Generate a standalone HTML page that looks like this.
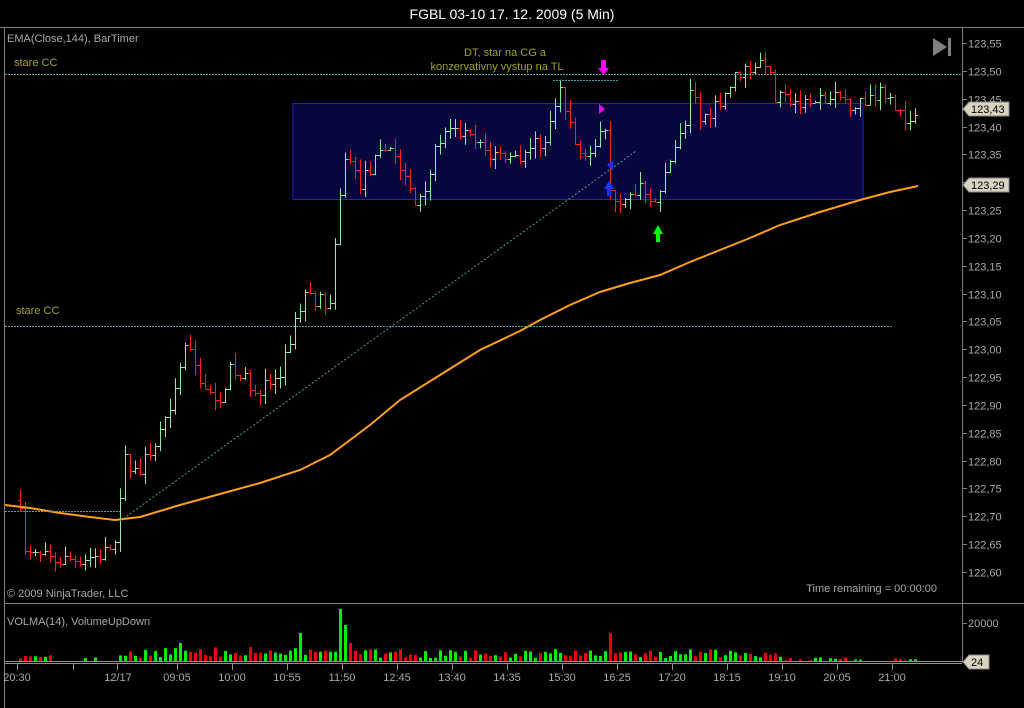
<!DOCTYPE html>
<html><head><meta charset="utf-8">
<style>
html,body{margin:0;padding:0;background:#000;width:1024px;height:708px;overflow:hidden}
svg{display:block;font-family:"Liberation Sans",sans-serif}
</style></head><body>
<svg id="s" width="1024" height="708" xmlns="http://www.w3.org/2000/svg">
<rect width="1024" height="708" fill="#000"/>
<text x="512" y="19" fill="#fff" font-size="14" text-anchor="middle">FGBL 03-10  17. 12. 2009 (5 Min)</text>
<line x1="0" y1="27.5" x2="1024" y2="27.5" stroke="#808080"/>
<line x1="4.5" y1="27" x2="4.5" y2="708" stroke="#808080"/>
<line x1="4" y1="603.5" x2="1024" y2="603.5" stroke="#808080"/>
<line x1="962.5" y1="27" x2="962.5" y2="663" stroke="#808080"/>
<rect x="293" y="103.5" width="570" height="96" fill="#07073d" stroke="#2222cc"/>
<g id="dyn"></g>
<line x1="5" y1="74.5" x2="962" y2="74.5" stroke="#4aa6a6" stroke-dasharray="2,1"/>
<line x1="5" y1="326.5" x2="892" y2="326.5" stroke="#4aa6a6" stroke-dasharray="2,1"/>
<line x1="5" y1="511.5" x2="120" y2="511.5" stroke="#4aa6a6" stroke-dasharray="2,1"/>
<line x1="553" y1="80.5" x2="618" y2="80.5" stroke="#4aa6a6" stroke-dasharray="2,1"/>
<line x1="120" y1="521" x2="636" y2="151" stroke="#4a9a9a" stroke-dasharray="2,2"/>
<text x="7" y="42" fill="#a8a8a8" font-size="11">EMA(Close,144), BarTimer</text>
<text x="14" y="66" fill="#a0a020" font-size="11">stare CC</text>
<text x="16" y="314" fill="#a0a020" font-size="11">stare CC</text>
<text x="505" y="56" fill="#a0a020" font-size="11" text-anchor="middle">DT, star na CG a</text>
<text x="497" y="70" fill="#a0a020" font-size="11" text-anchor="middle">konzervativny vystup na TL</text>
<text x="7" y="597" fill="#a8a8a8" font-size="11">© 2009 NinjaTrader, LLC</text>
<text x="937" y="592" fill="#a8a8a8" font-size="11" text-anchor="end">Time remaining = 00:00:00</text>
<text x="7" y="625" fill="#a8a8a8" font-size="11">VOLMA(14), VolumeUpDown</text>
<polygon points="933,38 947,47 933,56" fill="#808080"/><rect x="948" y="38" width="3" height="18" fill="#808080"/>
<path d="M601,60h5v8h3l-5.5,7l-5.5,-7h3z" fill="#ff00ff"/>
<polygon points="599,104 605,109 599,114" fill="#ff00ff"/>
<polygon points="613,160 607,165 613,171" fill="#2030ff"/>
<path d="M607,196v-7h-3l5,-8l5,8h-3v7z" fill="#2030ff"/>
<path d="M656,242v-8h-3l5,-9l5,9h-3v8z" fill="#00ff00"/>
<g id="ax" fill="#a8a8a8" font-size="11"></g>
<g id="tags"></g>
</svg>
<script>
var NS="http://www.w3.org/2000/svg",dyn=document.getElementById('dyn'),ax=document.getElementById('ax');
function el(t,a,p){var e=document.createElementNS(NS,t);for(var k in a)e.setAttribute(k,a[k]);(p||dyn).appendChild(e);return e;}
function Y(p){return 43+(123.55-p)/0.05*27.84;}
for(var i=0;i<=19;i++){var p=123.55-i*0.05,y=Math.round(Y(p))+.5;
 el('line',{x1:962,y1:y,x2:967,y2:y,stroke:'#808080'},ax);
 var t=el('text',{x:968,y:y+4},ax);t.textContent=p.toFixed(2).replace('.',',');}
el('line',{x1:962,y1:623.5,x2:967,y2:623.5,stroke:'#808080'},ax);
var t=el('text',{x:968,y:627},ax);t.textContent='20000';
el('line',{x1:5,y1:661.5,x2:962,y2:661.5,stroke:'#909090'});
el('line',{x1:5,y1:663.5,x2:962,y2:663.5,stroke:'#909090'});
var tl=[[17,'20:30'],[73,''],[117,'12/17'],[177,'09:05'],[232,'10:00'],[287,'10:55'],[342,'11:50'],[397,'12:45'],[452,'13:40'],[507,'14:35'],[562,'15:30'],[617,'16:25'],[672,'17:20'],[727,'18:15'],[782,'19:10'],[837,'20:05'],[892,'21:00']];
tl.forEach(function(a){el('line',{x1:a[0]+.5,y1:663,x2:a[0]+.5,y2:670,stroke:'#909090'},ax);if(a[1]){var t=el('text',{x:a[0]+(a[1]=='12/17'?1:0),y:681,'text-anchor':'middle'},ax);t.textContent=a[1];}});
var K=[[20,122.73],[25,122.63],[60,122.62],[100,122.63],[115,122.65],[120,122.72],[125,122.80],[140,122.78],[150,122.82],[170,122.88],[185,123.01],[200,122.95],[215,122.90],[230,122.96],[260,122.93],[280,122.95],[295,123.05],[305,123.10],[330,123.08],[340,123.27],[345,123.35],[360,123.30],[390,123.37],[415,123.26],[430,123.32],[440,123.38],[460,123.39],[490,123.35],[520,123.35],[545,123.38],[560,123.46],[575,123.37],[595,123.35],[603,123.44],[610,123.30],[620,123.25],[640,123.30],[658,123.26],[670,123.35],[685,123.40],[690,123.47],[700,123.41],[720,123.45],[740,123.50],[765,123.52],[775,123.45],[800,123.44],[840,123.45],[860,123.44],[880,123.47],[890,123.46],[900,123.42],[910,123.40],[918,123.42]];
function P(x){for(var i=0;i<K.length-1;i++)if(x<=K[i+1][0]){var a=K[i],b=K[i+1];return a[1]+(b[1]-a[1])*(x-a[0])/(b[0]-a[0]);}return K[K.length-1][1];}
var seed=7;function R(){seed=(seed*16807)%2147483647;return seed/2147483647;}
var prev=P(20);
for(var x=20;x<=918;x+=5){var c=P(x)+(R()-.5)*0.03,o=prev,hi=Math.max(o,c)+R()*0.02,lo=Math.min(o,c)-R()*0.02;
 var col=c>=o?'#90e8a8':'#ff2020';
 el('line',{x1:x+.5,y1:Y(hi),x2:x+.5,y2:Y(lo),stroke:col});
 el('line',{x1:x-2,y1:Math.round(Y(o))+.5,x2:x+.5,y2:Math.round(Y(o))+.5,stroke:col});
 el('line',{x1:x+.5,y1:Math.round(Y(c))+.5,x2:x+3,y2:Math.round(Y(c))+.5,stroke:col});
 prev=c;
 var v=2+R()*4;if(x>120)v=3+R()*9;if(x>160&&x<300)v=4+R()*10;if(x>500&&x<700)v=3+R()*9;if(x>780)v=R()*4;
 if(x==340)v=52;if(x==300)v=28;if(x==345)v=36;if(x==610)v=28;if(x==350||x==180)v=18;
 if(x>40&&x<120&&R()<.6)v=0;if(x>860&&x<890)v=0;
 if(v>0.5)el('rect',{x:x-1,y:661-v,width:3,height:v,fill:c>=o?'#00ee00':'#ee0000'});
}
el('polyline',{points:'5,505 30,508 60,513 90,517 115,520 140,517 180,505 220,494 260,483 300,470 330,455 370,425 400,400 440,375 480,350 520,331 540,320 570,305 600,292 630,283 660,275 690,262 720,250 750,238 780,225 820,212 860,200 890,192 918,186',fill:'none',stroke:'#ff9f1a','stroke-width':2});
var tg=document.getElementById('tags');
[[109,'123,43'],[185,'123,29'],[662,'24']].forEach(function(a){var w=a[1].length>2?40:20,x0=963,y=a[0];
 el('polygon',{points:x0+','+y+' '+(x0+6)+','+(y-7)+' '+(x0+6+w)+','+(y-7)+' '+(x0+6+w)+','+(y+7)+' '+(x0+6)+','+(y+7),fill:'#d8d4c0',stroke:'#888'},tg);
 var t=el('text',{x:x0+8,y:y+4,fill:'#000','font-size':11},tg);t.textContent=a[1];});
</script>
</body></html>
